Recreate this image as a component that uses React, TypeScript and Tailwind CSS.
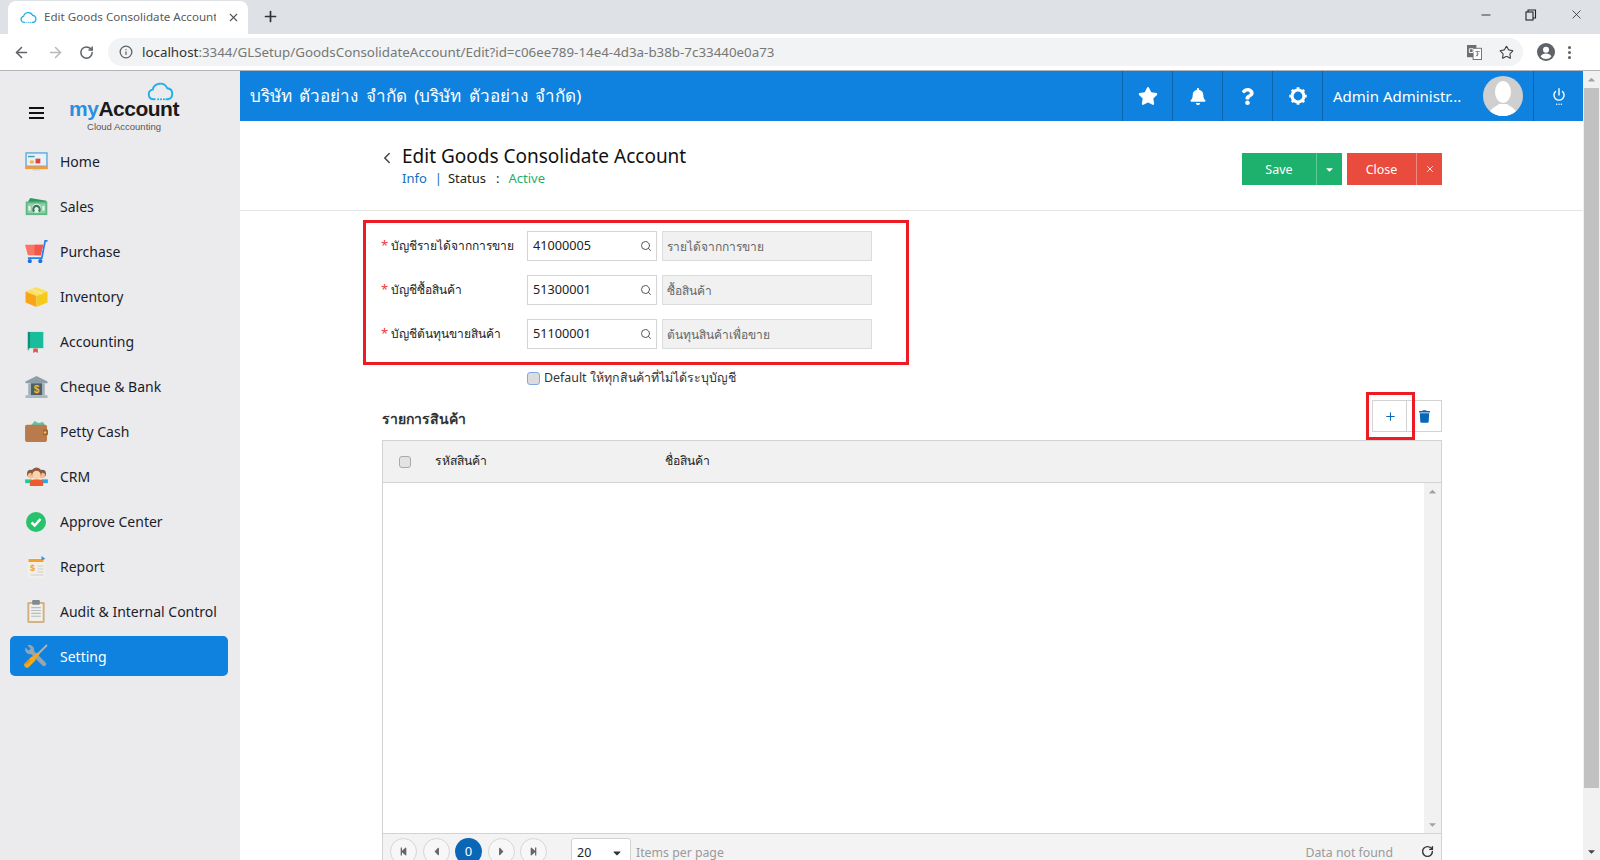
import { ArrowLeft, ArrowRight, ChevronLeft, Info, MoreVertical, Plus, RotateCw, Search, Star, X, Minus } from 'lucide-react';
import { FaBell, FaQuestion, FaStar, FaTrash, FaStepBackward, FaStepForward, FaCaretLeft, FaCaretRight, FaCaretDown, FaCaretUp } from 'react-icons/fa';
import { ReactNode } from 'react';

const CloudMark = ({ className }: { className: string }) => (
  <svg viewBox="0 0 28 20" className={className} fill="none" stroke="#1fb0e8" strokeWidth="2" strokeLinecap="round">
    <path d="M8 18H6.5a5 5 0 0 1-.6-9.9A8 8 0 0 1 21 6.6a5.8 5.8 0 0 1 .8 11.4H20" />
    <path d="M11.5 18h.1M14.5 18h.1M17.5 18h.1" />
  </svg>
);

const HomeIcon = () => (
  <svg viewBox="0 0 24 20" className="w-full h-full">
    <rect x="1" y="1" width="22" height="14" fill="#e8f1f5" stroke="#5aa5dc" strokeWidth="1.4" />
    <rect x="3" y="4" width="7" height="1.5" fill="#3f9fb5" />
    <rect x="11" y="7" width="5" height="5" fill="#e2413c" />
    <rect x="5" y="9" width="4" height="3" fill="#f5b335" />
    <rect x="0" y="15" width="24" height="3" fill="#f59a3c" />
    <rect x="8" y="18" width="8" height="1.5" fill="#b9dbe6" />
  </svg>
);
const SalesIcon = () => (
  <svg viewBox="0 0 24 20" className="w-full h-full">
    <path d="M2 5 L5 0 L23 3 V6Z" fill="#2f9a60" />
    <rect x="0" y="4" width="24" height="15" fill="#5fb784" />
    <rect x="2" y="6" width="20" height="11" fill="#8fd0a8" />
    <circle cx="12" cy="11.5" r="5" fill="#e6f4ea" />
    <path d="M9.5 15 a3.6 3.6 0 1 1 5 0" fill="none" stroke="#37795a" strokeWidth="2.4" />
    <rect x="3" y="9" width="2.5" height="5" fill="#e6f4ea" />
    <rect x="18.5" y="9" width="2.5" height="5" fill="#e6f4ea" />
  </svg>
);
const PurchaseIcon = () => (
  <svg viewBox="0 0 24 24" className="w-full h-full">
    <path d="M0 5 H19 L16.5 16 H3Z" fill="#fb7464" />
    <path d="M10 5 H19 L16.5 16 H10Z" fill="#f2574a" />
    <path d="M23.5 1 H21 L17.5 19 H3" fill="none" stroke="#2b7fe8" strokeWidth="1.8" />
    <circle cx="5" cy="22" r="2.2" fill="#1f6fe0" />
    <circle cx="16" cy="22" r="2.2" fill="#1f6fe0" />
  </svg>
);
const InventoryIcon = () => (
  <svg viewBox="0 0 24 24" className="w-full h-full">
    <path d="M12 1 L24 6 L12 11 L0 6Z" fill="#fde05a" />
    <path d="M0 6 L12 11 V23 L0 18Z" fill="#f9a51a" />
    <path d="M24 6 L12 11 V23 L24 18Z" fill="#f4cb1c" />
    <path d="M6 3.5 L18 8.5" stroke="#f1e6b0" strokeWidth="1.5" />
  </svg>
);
const AccountingIcon = () => (
  <svg viewBox="0 0 18 24" className="w-full h-full">
    <path d="M1 1 H17 V19 H1Z" fill="#19bd9b" />
    <rect x="0" y="1" width="2.5" height="20" fill="#0f8f75" />
    <rect x="1" y="19" width="16" height="2.5" fill="#e6f2ef" />
    <path d="M6 19 H11 V24 L8.5 22.5 L6 24Z" fill="#e5534b" />
  </svg>
);
const ChequeIcon = () => (
  <svg viewBox="0 0 24 24" className="w-full h-full">
    <path d="M12 0 L24 6 V8 H0 V6Z" fill="#8e9ea6" />
    <rect x="3" y="8" width="18" height="13" fill="#9fb0b8" />
    <rect x="6" y="8" width="12" height="13" fill="#4e5f68" />
    <rect x="0" y="21" width="24" height="3" fill="#a9b8bf" />
    <text x="12" y="19" textAnchor="middle" fontSize="11" fontWeight="700" fill="#f2b632" fontFamily="'Liberation Sans', sans-serif">$</text>
  </svg>
);
const PettyIcon = () => (
  <svg viewBox="0 0 24 22" className="w-full h-full">
    <path d="M6 5 L10 0 L14 2 L19 1 L21 5Z" fill="#63c2a6" />
    <rect x="0" y="4" width="23" height="18" rx="2" fill="#b97b4b" />
    <rect x="19" y="9" width="5" height="6" rx="1" fill="#9c6338" />
    <circle cx="21" cy="12" r="1.3" fill="#f2c14e" />
  </svg>
);
const CrmIcon = () => (
  <svg viewBox="0 0 24 20" className="w-full h-full">
    <path d="M0 13 H7 V17 H0Z" fill="#1fcb9a" />
    <path d="M17 13 H24 V17 H17Z" fill="#2ba6e8" />
    <circle cx="6" cy="7" r="4" fill="#7d5a4a" />
    <circle cx="18" cy="7" r="4" fill="#7d5a4a" />
    <circle cx="6" cy="9" r="3" fill="#f7bf8f" />
    <circle cx="18" cy="9" r="3" fill="#f7bf8f" />
    <path d="M5 20 V15 Q7 13 12 13 Q17 13 19 15 V20Z" fill="#ef5a2c" />
    <circle cx="12" cy="6" r="5.5" fill="#8d5a40" />
    <circle cx="12" cy="8.5" r="4.5" fill="#fcd2ab" />
  </svg>
);
const ApproveIcon = () => (
  <svg viewBox="0 0 20 20" className="w-full h-full">
    <circle cx="10" cy="10" r="10" fill="#27c26c" />
    <path d="M5.5 10.5 L8.7 13.5 L14.5 7" fill="none" stroke="#fff" strokeWidth="2.6" />
  </svg>
);
const ReportIcon = () => (
  <svg viewBox="0 0 18 22" className="w-full h-full">
    <rect x="0" y="2" width="18" height="20" fill="#f1efe9" />
    <rect x="1" y="3" width="15" height="3" fill="#f2a22a" />
    <path d="M14 0 L18 3 L14 4Z" fill="#3a8ecb" />
    <text x="5" y="15" textAnchor="middle" fontSize="9" fontWeight="700" fill="#eea21f" fontFamily="'Liberation Sans', sans-serif">$</text>
    <path d="M10 10 H16 M10 13 H16 M10 16 H16 M3 19 H16" stroke="#cfcfcf" strokeWidth="1" />
  </svg>
);
const AuditIcon = () => (
  <svg viewBox="0 0 18 24" className="w-full h-full">
    <rect x="0" y="2" width="18" height="22" rx="1.5" fill="#cfb183" />
    <rect x="2" y="4" width="14" height="18" fill="#f1efe8" />
    <rect x="5" y="0" width="8" height="5" rx="1" fill="#7e8c92" />
    <path d="M4 8 H14 M4 11 H14 M4 14 H14 M4 17 H14" stroke="#b5bdc1" strokeWidth="1.2" />
  </svg>
);
const SettingIcon = () => (
  <svg viewBox="0 0 24 24" className="w-full h-full">
    <path d="M7 7 L20 20" stroke="#99a5ab" strokeWidth="4.4" strokeLinecap="round" />
    <path d="M3.5 1.5 L7 5 L5 7 L1.5 3.5 C0 7 3 11 7.5 10 L10 7.5 C11 3 7 0 3.5 1.5Z" fill="#99a5ab" />
    <path d="M23 1 L13 11" stroke="#aab4b9" strokeWidth="1.8" />
    <path d="M14.5 9.5 L9 15" stroke="#f2a91f" strokeWidth="3" />
    <path d="M9 15 L3 21" stroke="#f2a91f" strokeWidth="5.4" strokeLinecap="round" />
    <path d="M6 16 L2 20" stroke="#e08a12" strokeWidth="1.6" />
  </svg>
);

const menu: { label: string; icon: ReactNode; w: string; h: string }[] = [
  { label: 'Home', icon: <HomeIcon />, w: 'w-[23px]', h: 'h-[19px]' },
  { label: 'Sales', icon: <SalesIcon />, w: 'w-[23px]', h: 'h-[18px]' },
  { label: 'Purchase', icon: <PurchaseIcon />, w: 'w-[23px]', h: 'h-[23px]' },
  { label: 'Inventory', icon: <InventoryIcon />, w: 'w-[23px]', h: 'h-[22px]' },
  { label: 'Accounting', icon: <AccountingIcon />, w: 'w-[18px]', h: 'h-[22px]' },
  { label: 'Cheque & Bank', icon: <ChequeIcon />, w: 'w-[23px]', h: 'h-[22px]' },
  { label: 'Petty Cash', icon: <PettyIcon />, w: 'w-[23px]', h: 'h-[21px]' },
  { label: 'CRM', icon: <CrmIcon />, w: 'w-[23px]', h: 'h-[19px]' },
  { label: 'Approve Center', icon: <ApproveIcon />, w: 'w-[20px]', h: 'h-[20px]' },
  { label: 'Report', icon: <ReportIcon />, w: 'w-[19px]', h: 'h-[22px]' },
  { label: 'Audit & Internal Control', icon: <AuditIcon />, w: 'w-[18px]', h: 'h-[23px]' },
];

const accounts = [
  { label: 'บัญชีรายได้จากการขาย', code: '41000005', name: 'รายได้จากการขาย' },
  { label: 'บัญชีซื้อสินค้า', code: '51300001', name: 'ซื้อสินค้า' },
  { label: 'บัญชีต้นทุนขายสินค้า', code: '51100001', name: 'ต้นทุนสินค้าเพื่อขาย' },
];

function BrowserChrome() {
  return (
    <>
      <div className="h-[34px] bg-[#dee1e6] flex items-end relative shrink-0">
        <div className="ml-2 w-[240px] h-[33px] bg-white rounded-t-lg flex items-center pl-3 pr-2 pb-[1px]">
          <CloudMark className="w-[17px] h-[13px] shrink-0" />
          <span className="ml-[7px] text-[11.6px] text-[#5a5a5a] w-[172px] overflow-hidden whitespace-nowrap">Edit Goods Consolidate Account</span>
          <X className="ml-auto w-[13px] h-[13px] text-[#555]" />
        </div>
        <Plus className="ml-[14px] mb-[9px] w-[17px] h-[17px] text-[#333]" strokeWidth={2.4} />
        <div className="ml-auto flex items-center gap-[32px] pr-[16px] self-start pt-[7px]">
          <Minus className="w-[14px] h-[14px] text-[#222]" strokeWidth={1.5} />
          <svg viewBox="0 0 12 12" className="w-[12px] h-[12px]" fill="none" stroke="#222" strokeWidth="1.1">
            <rect x="1" y="3" width="7" height="8" />
            <path d="M3 3V1H10.5V9H8" />
          </svg>
          <X className="w-[15px] h-[15px] text-[#222]" strokeWidth={1.2} />
        </div>
      </div>
      <div className="h-[37px] bg-white border-b border-[#b4b4b4] flex items-center shrink-0">
        <ArrowLeft className="ml-[13px] w-[17px] h-[17px] text-[#5f6368]" strokeWidth={2.2} />
        <ArrowRight className="ml-[17px] w-[17px] h-[17px] text-[#b7b9bc]" strokeWidth={2.2} />
        <RotateCw className="ml-[15px] w-[15px] h-[15px] text-[#5f6368]" strokeWidth={2.4} />
        <div className="ml-[14px] w-[1415px] h-[28px] bg-[#f1f3f4] rounded-full flex items-center pl-[11px] pr-[9px]">
          <Info className="w-[14px] h-[14px] text-[#5f6368]" strokeWidth={2.2} />
          <span className="ml-[9px] text-[13.35px] text-[#777]"><span className="text-[#333]">localhost</span>:3344/GLSetup/GoodsConsolidateAccount/Edit?id=c06ee789-14e4-4d3a-b38b-7c33440e0a73</span>
          <div className="ml-auto flex items-center gap-[17px]">
            <svg viewBox="0 0 16 16" className="w-[15px] h-[15px]">
              <rect x="0" y="0" width="10" height="13" fill="#6b6f73" />
              <rect x="6.5" y="3.5" width="9" height="12" fill="#fff" stroke="#6b6f73" />
              <path d="M2.5 4h4v4h-4z" fill="none" stroke="#fff" strokeWidth="1" />
              <path d="M9 7h4.5M11 7v5M9.5 12l3-3" stroke="#6b6f73" strokeWidth="0.9" fill="none" />
            </svg>
            <Star className="w-[15px] h-[15px] text-[#444]" strokeWidth={1.8} />
          </div>
        </div>
        <svg viewBox="0 0 18 18" className="ml-[14px] w-[18px] h-[18px]">
          <circle cx="9" cy="9" r="9" fill="#5f6368" />
          <circle cx="9" cy="6.8" r="3" fill="#fff" />
          <path d="M3.6 13.4c1-2 3.2-2.8 5.4-2.8s4.4.8 5.4 2.8A7 7 0 0 1 9 16a7 7 0 0 1-5.4-2.6Z" fill="#fff" />
        </svg>
        <MoreVertical className="ml-[6px] w-[17px] h-[17px] text-[#5f6368]" strokeWidth={2.4} />
      </div>
    </>
  );
}

function Sidebar() {
  return (
    <aside className="w-[240px] shrink-0 bg-[#ebebed] flex flex-col">
      <div className="h-[66px] flex items-start pl-[29px] relative">
        <div className="flex flex-col gap-[3px] mt-[36px]">
          <span className="block w-[15px] h-[2px] bg-[#111]" />
          <span className="block w-[15px] h-[2px] bg-[#111]" />
          <span className="block w-[15px] h-[2px] bg-[#111]" />
        </div>
        <div className="ml-[25px] mt-[27px] flex flex-col items-center leading-none relative w-[110px]">
          <CloudMark className="absolute -top-[17px] left-[78px] w-[27px] h-[21px]" />
          <span className="text-[21px] font-bold tracking-[-0.5px] font-['Liberation_Sans',sans-serif] text-[#1a1a1a] leading-[22px]"><span className="text-[#2b8fe0]">my</span>Account</span>
          <span className="mt-[2px] text-[9.5px] text-[#555] font-['Liberation_Sans',sans-serif] leading-[10px]">Cloud Accounting</span>
        </div>
      </div>
      <nav className="mt-[2px] flex flex-col">
        {menu.map((m) => (
          <div key={m.label} className="h-[45px] flex items-center pl-[24px] text-[14px] text-[#1c1c2c]">
            <span className="w-[24px] h-[24px] flex items-center justify-center shrink-0">
              <span className={`${m.w} ${m.h} block`}>{m.icon}</span>
            </span>
            <span className="ml-[12px] whitespace-nowrap">{m.label}</span>
          </div>
        ))}
        <div className="ml-[10px] w-[218px] h-[40px] mt-[2px] bg-[#0e82de] rounded-[5px] flex items-center pl-[14px] text-[14px] text-white">
          <span className="w-[24px] h-[24px] block shrink-0"><SettingIcon /></span>
          <span className="ml-[12px]">Setting</span>
        </div>
      </nav>
    </aside>
  );
}

function TopBar() {
  const cell = 'w-[50px] h-full border-l border-[#0b65ad] flex items-center justify-center text-white shrink-0';
  return (
    <header className="h-[50px] bg-[#0e82de] flex items-center shrink-0">
      <span className="ml-[10px] text-[17px] text-white [word-spacing:3px]">บริษัท ตัวอย่าง จำกัด (บริษัท ตัวอย่าง จำกัด)</span>
      <div className="ml-auto flex h-full items-center">
        <div className={cell}><FaStar className="w-[20px] h-[20px]" /></div>
        <div className={cell}><FaBell className="w-[16px] h-[17px]" /></div>
        <div className={cell}><FaQuestion className="w-[15px] h-[17px]" /></div>
        <div className={cell}>
          <svg viewBox="0 0 24 24" className="w-[22px] h-[22px]" fill="none" stroke="#fff">
            <circle cx="12" cy="12" r="6.5" strokeWidth="3.4" />
            <path d="M12 2.5v3M12 18.5v3M2.5 12h3M18.5 12h3M5.3 5.3l2.1 2.1M16.6 16.6l2.1 2.1M5.3 18.7l2.1-2.1M16.6 7.4l2.1-2.1" strokeWidth="3" />
          </svg>
        </div>
        <div className="w-[211px] h-full border-l border-[#0b65ad] flex items-center pl-[10px] text-white text-[15px] shrink-0">
          <span className="whitespace-nowrap">Admin Administr...</span>
          <div className="ml-auto mr-[10px] w-[40px] h-[40px] rounded-full bg-[#cfcfcf] overflow-hidden flex items-end justify-center">
            <svg viewBox="0 0 40 40" className="w-[40px] h-[40px]" fill="#fff">
              <ellipse cx="20" cy="16" rx="8" ry="11" />
              <path d="M6 40c0-8 7-9 10-12h8c3 3 10 4 10 12Z" />
            </svg>
          </div>
        </div>
        <div className={cell}>
          <svg viewBox="0 0 18 24" className="w-[14px] h-[19px]" fill="none" stroke="#fff" strokeWidth="1.8" strokeLinecap="round">
            <path d="M9 2v8" />
            <path d="M4.5 5.5a6.5 6.5 0 1 0 9 0" />
            <path d="M6 22h.1M9 22h.1M12 22h.1" />
          </svg>
        </div>
      </div>
    </header>
  );
}

function PageHead() {
  return (
    <div className="h-[90px] border-b border-[#e5e5e5] shrink-0 flex items-start pt-[21px] relative">
      <ChevronLeft className="ml-[138px] mt-[7px] w-[18px] h-[18px] text-[#444]" strokeWidth={2} />
      <div className="ml-[6px]">
        <div className="text-[19px] leading-[28px] text-[#111]">Edit Goods Consolidate Account</div>
        <div className="text-[13px] leading-[18px] -mt-[1px] flex">
          <span className="text-[#1170c4]">Info</span>
          <span className="ml-[8px] text-[#1170c4]">|</span>
          <span className="ml-[6px] text-[#222]">Status</span>
          <span className="ml-[10px] text-[#222]">:</span>
          <span className="ml-[9px] text-[#1fae6c]">Active</span>
        </div>
      </div>
      <div className="ml-auto mr-[141px] mt-[11px] flex gap-[5px] text-white text-[12.5px]">
        <div className="flex h-[32px] bg-[#1eb16d]">
          <div className="w-[74px] flex items-center justify-center pt-[2px]">Save</div>
          <div className="w-[26px] border-l border-[#5fcb97] flex items-center justify-center"><FaCaretDown className="w-[11px] h-[11px]" /></div>
        </div>
        <div className="flex h-[32px] bg-[#e94b3c]">
          <div className="w-[69px] flex items-center justify-center pt-[2px]">Close</div>
          <div className="w-[26px] border-l border-[#f08a80] flex items-center justify-center"><X className="w-[10px] h-[10px]" /></div>
        </div>
      </div>
    </div>
  );
}

function AccountForm() {
  return (
    <div className="-ml-[19px] mt-[9px] w-[546px] h-[145px] border-[3px] border-[#ed1c24] pt-[8px] flex flex-col gap-[14px]">
      {accounts.map((a) => (
        <div key={a.code} className="flex items-center h-[30px]">
          <span className="ml-[15px] text-[13px] text-[#ee3a3a] w-[10px]">*</span>
          <span className="text-[12px] text-[#222] w-[136px] whitespace-nowrap">{a.label}</span>
          <div className="w-[130px] h-[30px] border border-[#d4d4d4] flex items-center pl-[5px] pr-[4px] text-[12.7px] text-[#222]">
            <span>{a.code}</span>
            <Search className="ml-auto w-[12px] h-[12px] text-[#555]" strokeWidth={2} />
          </div>
          <div className="ml-[5px] w-[210px] h-[30px] bg-[#f1f1f1] border border-[#dcdcdc] flex items-center pl-[4px] pt-[1px] text-[12px] text-[#666]">{a.name}</div>
        </div>
      ))}
    </div>
  );
}

function GoodsTable() {
  return (
    <div className="mt-[8px] border border-[#d2d2d2] flex flex-col h-[440px]">
      <div className="h-[42px] bg-[#f1f1f1] border-b border-[#d2d2d2] flex items-center shrink-0 text-[12.2px] text-[#222]">
        <span className="ml-[16px] w-[12px] h-[12px] bg-[#e3e3e3] border border-[#aaa] rounded-[3px]" />
        <span className="ml-[24px] w-[230px]">รหัสสินค้า</span>
        <span>ชื่อสินค้า</span>
      </div>
      <div className="h-[350px] flex shrink-0">
        <div className="flex-1" />
        <div className="w-[17px] bg-[#f1f1f1] flex flex-col items-center justify-between py-[3px] text-[#a3a3a3]">
          <FaCaretUp className="w-[11px] h-[11px]" />
          <FaCaretDown className="w-[11px] h-[11px]" />
        </div>
      </div>
      <div className="flex-1 bg-[#f3f3f3] border-t border-[#d2d2d2] flex items-start pt-[4px] text-[12.3px]">
        <div className="ml-[7px] flex gap-[5.5px]">
          <PagerBtn><FaStepBackward className="w-[9px] h-[9px]" /></PagerBtn>
          <PagerBtn><FaCaretLeft className="w-[13px] h-[13px]" /></PagerBtn>
          <span className="w-[27px] h-[27px] rounded-full bg-[#0a66b7] text-white flex items-center justify-center text-[13px]">0</span>
          <PagerBtn><FaCaretRight className="w-[13px] h-[13px]" /></PagerBtn>
          <PagerBtn><FaStepForward className="w-[9px] h-[9px]" /></PagerBtn>
        </div>
        <div className="ml-[24px] w-[60px] h-[30px] bg-white border border-[#d2d2d2] rounded-t-[3px] flex items-center pl-[5px] text-[12.5px] text-[#222]">
          20
          <FaCaretDown className="ml-auto mr-[7px] w-[12px] h-[12px] text-[#333]" />
        </div>
        <span className="ml-[5px] mt-[6px] text-[#9a9a9a]">Items per page</span>
        <span className="ml-auto mt-[6px] text-[#9a9a9a]">Data not found</span>
        <RotateCw className="ml-[28px] mr-[7px] mt-[7px] w-[13px] h-[13px] text-[#333]" strokeWidth={2.6} />
      </div>
    </div>
  );
}

export default function App() {
  return (
    <div className="w-[1600px] h-[860px] overflow-hidden flex flex-col bg-white font-['Noto_Sans',sans-serif]">
      <BrowserChrome />
      <div className="flex flex-1 min-h-0">
        <Sidebar />
        <main className="flex-1 min-w-0 flex flex-col">
          <TopBar />
          <PageHead />
          <div className="ml-[142px] w-[1060px] relative">
            <AccountForm />
            <label className="ml-[145px] mt-[6px] flex items-center h-[14px] text-[12.4px] text-[#333]">
              <span className="w-[13px] h-[13px] bg-[#dcdcdc] border border-[#7fa8e8] rounded-[3px]" />
              <span className="ml-[4px]">Default ให้ทุกสินค้าที่ไม่ได้ระบุบัญชี</span>
            </label>
            <div className="mt-[15px] flex items-end h-[32px]">
              <span className="text-[14px] font-semibold text-[#333] mb-[3px]">รายการสินค้า</span>
              <div className="ml-auto flex h-[32px]">
                <div className="w-[35px] border border-[#d2d2d2] flex items-center justify-center pl-[1px]"><Plus className="w-[13px] h-[13px] text-[#0a66b7]" strokeWidth={2} /></div>
                <div className="w-[35px] border border-l-0 border-[#d2d2d2] flex items-center justify-center pl-[1px]"><FaTrash className="w-[11px] h-[13px] text-[#0a66b7]" /></div>
              </div>
              <div className="absolute left-[984px] top-[181px] w-[49px] h-[48px] border-[3px] border-[#ed1c24]" />
            </div>
            <GoodsTable />
          </div>
        </main>
        <div className="w-[17px] shrink-0 bg-[#f1f1f1] flex flex-col items-center">
          <FaCaretUp className="w-[11px] h-[11px] text-[#a3a3a3] mt-[3px]" />
          <div className="mt-[3px] w-[15px] h-[700px] bg-[#c1c1c1]" />
          <FaCaretDown className="w-[11px] h-[11px] text-[#444] mt-auto mb-[3px]" />
        </div>
      </div>
    </div>
  );
}

const PagerBtn = ({ children }: { children: ReactNode }) => (
  <span className="w-[27px] h-[27px] rounded-full border border-[#d5d5d5] bg-[#f7f7f7] text-[#666] flex items-center justify-center">{children}</span>
);
